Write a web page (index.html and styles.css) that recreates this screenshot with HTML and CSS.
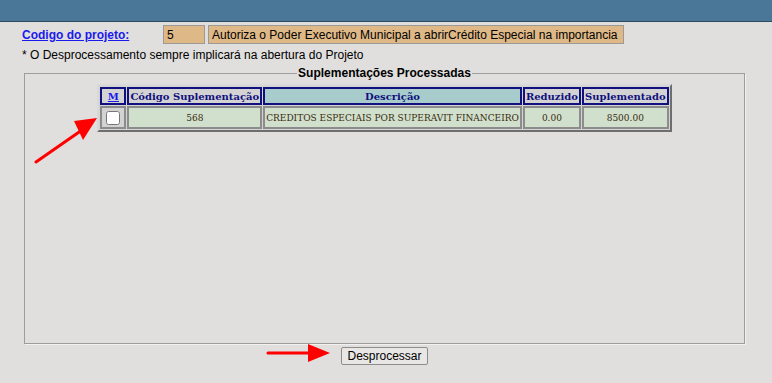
FILE: index.html
```html
<!DOCTYPE html>
<html lang="pt-br">
<head>
    <meta charset="UTF-8">
    <title>Desprocessar Projeto</title>
    <link rel="stylesheet" href="styles.css">
</head>
<body>

<div class="topo"></div>

<div class="conteudo">
    <div class="linha-projeto">
        <a class="rotulo" href="#">Codigo do projeto:</a>
        <input class="campo cod" type="text" value="5">
        <input class="campo desc" type="text" value="Autoriza o Poder Executivo Municipal a abrirCrédito Especial na importancia de R$ 8.500,00">
    </div>
    <div class="aviso">* O Desprocessamento sempre implicará na abertura do Projeto</div>

    <fieldset class="quadro">
        <legend>Suplementações Processadas</legend>
        <table class="grade">
            <tr>
                <th class="col-m"><a href="#">M</a></th>
                <th>Código Suplementação</th>
                <th class="col-desc">Descrição</th>
                <th>Reduzido</th>
                <th>Suplementado</th>
            </tr>
            <tr>
                <td class="col-m"><input type="checkbox" class="marca"></td>
                <td class="num">568</td>
                <td>CREDITOS ESPECIAIS POR SUPERAVIT FINANCEIRO</td>
                <td class="num">0.00</td>
                <td class="num">8500.00</td>
            </tr>
        </table>
    </fieldset>

    <div class="acoes">
        <button type="button" class="botao">Desprocessar</button>
    </div>
</div>

<!-- setas de destaque -->
<svg class="seta seta-1" width="80" height="60" viewBox="0 0 80 60">
    <line x1="2" y1="46" x2="48" y2="14" stroke="#f00" stroke-width="3" stroke-linecap="round"/>
    <polygon points="63,2 40,5 49,24" fill="#f00"/>
</svg>
<svg class="seta seta-2" width="70" height="24" viewBox="0 0 70 24">
    <line x1="2" y1="11" x2="44" y2="11" stroke="#f00" stroke-width="3" stroke-linecap="round"/>
    <polygon points="64,11 42,2 42,20" fill="#f00"/>
</svg>

</body>
</html>
```

FILE: styles.css
```css
body {
    margin: 0;
    background-color: #e0dfdd;
    font-family: "Liberation Sans", Arial, sans-serif;
    font-size: 12px;
    color: #000;
}
.topo {
    height: 21px;
    background-color: #4a7798;
    border-bottom: 1px solid #2e4b61;
}
.conteudo {
    padding: 3px 0 0 22px;
}
.linha-projeto {
    display: flex;
    align-items: center;
    height: 19px;
}
.rotulo {
    color: #1a1aee;
    font-weight: bold;
    font-size: 12px;
    width: 141px;
}
.campo {
    box-sizing: border-box;
    height: 19px;
    margin: 0;
    padding: 0 3px;
    background-color: #deb887;
    border: 1px solid #9c9a96;
    font-family: "Liberation Sans", Arial, sans-serif;
    font-size: 12px;
    color: #000;
}
.cod {
    width: 42px;
}
.desc {
    width: 416px;
    margin-left: 3px;
}
.aviso {
    margin-top: 3px;
    line-height: 16px;
}
.quadro {
    box-sizing: border-box;
    width: 721px;
    height: 278px;
    margin: 3px 0 0 2px;
    padding: 0;
    border: 1px solid #9e9c9e;
    box-shadow: 1px 1px 0 #f2f1f0;
}
.quadro legend {
    margin: 0 auto;
    padding: 0 1px;
    font-weight: bold;
    font-size: 12px;
}
.grade {
    margin: 4px auto 0;
    border: 2px solid;
    border-color: #d8d8d8 #6e6e6e #6e6e6e #d8d8d8;
    background-color: #d3d3d3;
    border-spacing: 1px;
    font-family: "DejaVu Serif", serif;
    font-size: 10px;
}
.grade th {
    border: 2px solid #10107e;
    color: #10107e;
    background-color: #d3d3d3;
    padding: 0 1px;
    font-weight: bold;
    height: 14px;
}
.grade th a {
    color: #1a1aee;
}
.grade th.col-desc {
    background-color: #a8cccc;
}
.grade td {
    border: 2px solid #8c8c8c;
    background-color: #d0e0cc;
    color: #3a2a10;
    padding: 0 1px;
    height: 19px;
    font-size: 9px;
}
.grade td.num {
    text-align: center;
}
.grade .col-m {
    width: 20px;
    text-align: center;
}
.grade td.col-m {
    background-color: #d3d3d3;
}
.marca {
    width: 14px;
    height: 14px;
    margin: 2px 0 0;
}
.acoes {
    width: 721px;
    margin-left: 2px;
    text-align: center;
    margin-top: 3px;
}
.botao {
    font-family: "Liberation Sans", Arial, sans-serif;
    font-size: 12px;
    padding: 0 5px;
    height: 18px;
    background-color: #e8e7e5;
    border: 1px solid #8e8c8a;
    border-radius: 2px;
    color: #000;
}
.seta {
    position: absolute;
}
.seta-1 {
    left: 34px;
    top: 116px;
}
.seta-2 {
    left: 266px;
    top: 342px;
}
```
